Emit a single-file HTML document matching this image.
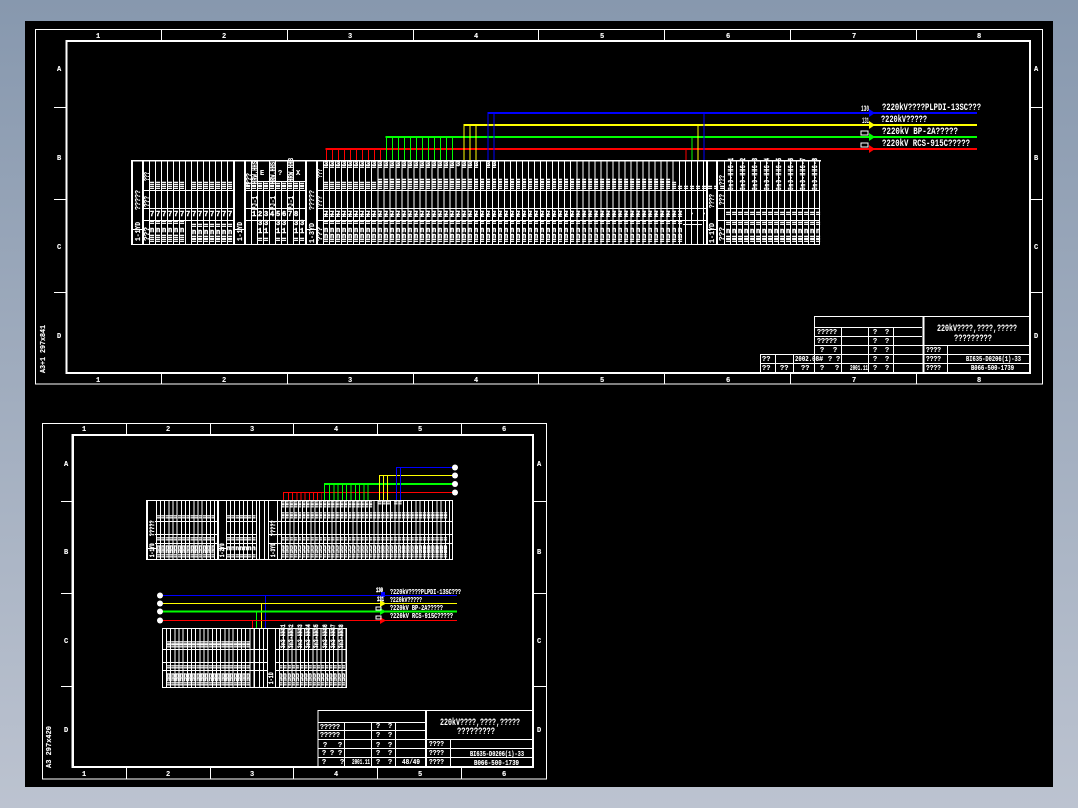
<!DOCTYPE html>
<html><head><meta charset="utf-8"><style>
html,body{margin:0;padding:0;width:1078px;height:808px;overflow:hidden;background:linear-gradient(#8798ae,#bcc3d0)}
svg{position:absolute;left:0;top:0}
text{font-family:"Liberation Mono",monospace;fill:#fff;font-weight:bold}
.m{font-size:7px;letter-spacing:1.8px;stroke:#fff;stroke-width:.4}
.s{font-size:6px;letter-spacing:.57px;stroke:#fff;stroke-width:.4}
.l{font-size:7px;stroke:#fff;stroke-width:.12}
.t{font-size:10px}
.u{font-size:8px}
.w{stroke:#fff;stroke-width:1;fill:none;shape-rendering:crispEdges}
</style></head><body>
<svg width="1078" height="808" viewBox="0 0 1078 808">
<rect x="25" y="21" width="1028" height="766" fill="#000"/>

<!-- FRAME 1 -->
<g shape-rendering="crispEdges" fill="none" stroke="#fff">
<rect x="35.5" y="29.5" width="1007" height="354.5"/>
<rect x="66.5" y="41" width="963.5" height="332" stroke-width="2"/>
<path d="M161.5 30V40M287.5 30V40M413.5 30V40M538.5 30V40M664.5 30V40M790.5 30V40M916.5 30V40M161.5 374V384M287.5 374V384M413.5 374V384M538.5 374V384M664.5 374V384M790.5 374V384M916.5 374V384M54 107.5H66M54 199.5H66M54 292.5H66M1030 107.5H1042M1030 199.5H1042M1030 292.5H1042"/>
</g>
<g>
<text class="l" x="96" y="38">1</text><text class="l" x="222" y="38">2</text><text class="l" x="348" y="38">3</text><text class="l" x="474" y="38">4</text><text class="l" x="600" y="38">5</text><text class="l" x="726" y="38">6</text><text class="l" x="852" y="38">7</text><text class="l" x="977" y="38">8</text>
<text class="l" x="96" y="382">1</text><text class="l" x="222" y="382">2</text><text class="l" x="348" y="382">3</text><text class="l" x="474" y="382">4</text><text class="l" x="600" y="382">5</text><text class="l" x="726" y="382">6</text><text class="l" x="852" y="382">7</text><text class="l" x="977" y="382">8</text>
<text class="l" x="57" y="71">A</text><text class="l" x="57" y="160">B</text><text class="l" x="57" y="249">C</text><text class="l" x="57" y="338">D</text>
<text class="l" x="1034" y="71">A</text><text class="l" x="1034" y="160">B</text><text class="l" x="1034" y="249">C</text><text class="l" x="1034" y="338">D</text>
</g>
<text class="l" transform="translate(45,373) rotate(-90)" textLength="48" lengthAdjust="spacingAndGlyphs">A3+1 297x841</text>

<!-- MAIN BUS LINES -->
<g shape-rendering="crispEdges" fill="none" stroke-width="2">
<path d="M487.5 113H977" stroke="#0000ff"/>
<path d="M463.5 125H977" stroke="#ffff00"/>
<path d="M385.5 137H977" stroke="#00ff00"/>
<path d="M325.5 149H977" stroke="#ff0000"/>
<path d="M464 125V160M470 125V160M476 125V160M698 125V160" stroke="#ffff00" stroke-width="1"/>
<path d="M488 113V160M494 113V160M704 113V160" stroke="#0000ff" stroke-width="1"/>
<path d="M692 137V160" stroke="#00ff00" stroke-width="1"/>
<path d="M686 149V160" stroke="#ff0000" stroke-width="1"/>
<line x1="326" x2="381" y1="155" y2="155" stroke="#ff0000" stroke-width="11" stroke-dasharray="1 5"/>
<line x1="386" x2="453" y1="149" y2="149" stroke="#00ff00" stroke-width="23" stroke-dasharray="1 5"/>
</g>
<path d="M869 109V117L875 113Z" fill="#0000ff"/><path d="M869 121V129L875 125Z" fill="#ffff00"/><path d="M869 133V141L875 137Z" fill="#00ff00"/><path d="M869 145V153L875 149Z" fill="#ff0000"/>
<text class="u" x="861" y="111" textLength="8" lengthAdjust="spacingAndGlyphs">130</text>
<text class="u" x="862" y="123" textLength="7" lengthAdjust="spacingAndGlyphs">131</text>
<rect x="861" y="131" width="7" height="4" class="w"/><rect x="861" y="143" width="7" height="4" class="w"/>
<text class="t" x="882" y="110" textLength="99" lengthAdjust="spacingAndGlyphs">?220kV????PLPDI-13SC???</text>
<text class="t" x="881" y="122" textLength="46" lengthAdjust="spacingAndGlyphs">?220kV?????</text>
<text class="t" x="882" y="134" textLength="76" lengthAdjust="spacingAndGlyphs">?220kV BP-2A?????</text>
<text class="t" x="882" y="146" textLength="88" lengthAdjust="spacingAndGlyphs">?220kV RCS-915C?????</text>

<!-- MAIN TABLE -->
<g shape-rendering="crispEdges" stroke="#fff" fill="none">
<path d="M131 160.5H821" stroke-width="1.5"/>
<path d="M131 244.5H820"/>
<path d="M143 190.5H233M245 190.5H305M317 190.5H706M718 190.5H820M143 208.5H233M245 208.5H305M317 208.5H706M718 208.5H820M143 220.5H233M245 220.5H305M317 220.5H706M718 220.5H820M131 229.5H143M233 229.5H245M305 229.5H317M706 229.5H717M257 181.5H305M683 224.5H702"/>
<path d="M131.5 160V245M143.5 160V245M233.5 160V245M245.5 160V245M251.5 160V245M257.5 160V245M269.5 160V245M275.5 160V245M287.5 160V245M293.5 160V245M305.5 160V245M317.5 160V245M263.5 181V245M281.5 181V245M299.5 181V245M706.5 160V245M717.5 160V245M819.5 160V245"/>
<line x1="149" x2="233" y1="202" y2="202" stroke-width="84" stroke-dasharray="1 5"/>
<line x1="323" x2="705" y1="202.5" y2="202.5" stroke-width="85" stroke-dasharray="1 5.03"/>
<line x1="724" x2="820" y1="202" y2="202" stroke-width="84" stroke-dasharray="1 5"/>
<path d="M132.5 160V245M142.5 160V245M234.5 160V245M244.5 160V245M306.5 160V245M316.5 160V245M707.5 160V245M716.5 160V245" />
</g>

<g>
<text class="m" x="324" y="166">33333333333333333333333</text>
<text class="m" x="462" y="166">333</text>
<text class="m" x="486" y="166">33</text>
<text class="m" x="324" y="169">======================</text>
<text class="m" x="462" y="169">===</text>
<text class="m" x="486" y="169">==</text>
<text class="m" x="324" y="185">   </text><text class="m" x="378" y="183">=================================================</text>
<text class="m" x="324" y="186">==========</text><text class="m" x="378" y="186">==================================================</text>
<text class="m" x="324" y="190">===================================================================</text>
<text class="m" x="150" y="186">======</text><text class="m" x="192" y="186">=======</text>
<text class="m" x="150" y="190">======</text><text class="m" x="192" y="190">=======</text>
<text class="m" x="246" y="187">==========</text>
<text class="m" x="246" y="190">==========</text>
<text class="m" x="150" y="216">77777777777777</text>
<text class="m" x="252" y="216">12345678</text>
<text class="m" x="324" y="216">777777777777777777777777777777777777777777777777777777777777</text>
<text class="m" x="324" y="218">============================================================</text>
<text class="m" x="690" y="214">. .</text>
<text class="m" x="726" y="216">================</text>
<text class="m" x="150" y="225">======</text><text class="m" x="192" y="228">=======</text>
<text class="m" x="150" y="232">nnnnnn</text><text class="m" x="192" y="234">nnnnnnn</text>
<text class="m" x="150" y="239">======</text><text class="m" x="192" y="240">=======</text>
<text class="m" x="150" y="243">======</text><text class="m" x="192" y="243">=======</text>
<text class="m" x="258" y="225">33</text><text class="m" x="276" y="225">33</text><text class="m" x="294" y="225">33</text>
<text class="m" x="258" y="233">11</text><text class="m" x="276" y="233">11</text><text class="m" x="294" y="233">11</text>
<text class="m" x="258" y="242">==</text><text class="m" x="276" y="242">==</text><text class="m" x="294" y="242">==</text>
<text class="m" x="324" y="225">============================================================</text>
<text class="m" x="324" y="232">nnnnnnnnnnnnnnnnnnnnnnnnnnnnnnnnnnnnnnnnnnnnnnnnnnnnnnnnnnnn</text>
<text class="m" x="324" y="238">nnnnnnnnnnnnnnnnnnnnnnnnnnnnnnnnnnnnnnnnnnnnnnnnnnnnnnnnnnnn</text>
<text class="m" x="324" y="243">============================================================</text>
<text class="m" x="726" y="226">================</text>
<text class="m" x="726" y="233">nnnnnnnnnnnnnnnn</text>
<text class="m" x="726" y="240">================</text>
<text class="m" x="726" y="243">================</text>
<text class="l" transform="translate(140,210) rotate(-90)" textLength="20" lengthAdjust="spacingAndGlyphs">?????</text>
<text class="l" transform="translate(140,241) rotate(-90)" textLength="19" lengthAdjust="spacingAndGlyphs">1-1YD</text>
<text class="l" transform="translate(242,241) rotate(-90)" textLength="19" lengthAdjust="spacingAndGlyphs">1-1YD</text>
<text class="l" transform="translate(314,210) rotate(-90)" textLength="20" lengthAdjust="spacingAndGlyphs">?????</text>
<text class="l" transform="translate(314,243) rotate(-90)" textLength="20" lengthAdjust="spacingAndGlyphs">1-3YD</text>
<text class="l" transform="translate(714,208) rotate(-90)" textLength="14" lengthAdjust="spacingAndGlyphs">????</text>
<text class="l" transform="translate(714,243) rotate(-90)" textLength="20" lengthAdjust="spacingAndGlyphs">1-1YD</text>
<text class="l" transform="translate(149,181) rotate(-90)" textLength="9" lengthAdjust="spacingAndGlyphs">???</text>
<text class="l" transform="translate(149,207) rotate(-90)" textLength="11" lengthAdjust="spacingAndGlyphs">???</text>
<text class="l" transform="translate(149,241) rotate(-90)" textLength="14" lengthAdjust="spacingAndGlyphs">???</text>
<text class="l" transform="translate(251,185) rotate(-90)" textLength="12" lengthAdjust="spacingAndGlyphs">???</text>
<text class="l" transform="translate(257,184) rotate(-90)" textLength="23" lengthAdjust="spacingAndGlyphs">HRW.HHS</text>
<text class="l" transform="translate(257,210) rotate(-90)" textLength="14" lengthAdjust="spacingAndGlyphs">PJ-1</text>
<text class="l" transform="translate(275,184) rotate(-90)" textLength="22" lengthAdjust="spacingAndGlyphs">HRW.HHS</text>
<text class="l" transform="translate(275,210) rotate(-90)" textLength="14" lengthAdjust="spacingAndGlyphs">PJ-1</text>
<text class="l" transform="translate(293,182) rotate(-90)" textLength="24" lengthAdjust="spacingAndGlyphs">HRW.HHB</text>
<text class="l" transform="translate(293,210) rotate(-90)" textLength="14" lengthAdjust="spacingAndGlyphs">PJ-1</text>
<text class="l" transform="translate(322,178) rotate(-90)" textLength="9" lengthAdjust="spacingAndGlyphs">???</text>
<text class="l" transform="translate(322,207) rotate(-90)" textLength="11" lengthAdjust="spacingAndGlyphs">???</text>
<text class="l" transform="translate(322,241) rotate(-90)" textLength="14" lengthAdjust="spacingAndGlyphs">???</text>
<text class="l" x="260" y="175">E</text><text class="l" x="278" y="175">?</text><text class="l" x="296" y="175">X</text>
<text class="m" transform="translate(733,190) rotate(-90)" textLength="33" lengthAdjust="spacingAndGlyphs">3n3-HHS-1</text>
<text class="m" transform="translate(745,190) rotate(-90)" textLength="33" lengthAdjust="spacingAndGlyphs">3n3-HHS-2</text>
<text class="m" transform="translate(757,190) rotate(-90)" textLength="33" lengthAdjust="spacingAndGlyphs">3n3-HHS-3</text>
<text class="m" transform="translate(769,190) rotate(-90)" textLength="33" lengthAdjust="spacingAndGlyphs">3n3-HHS-4</text>
<text class="m" transform="translate(781,190) rotate(-90)" textLength="33" lengthAdjust="spacingAndGlyphs">3n3-HHS-5</text>
<text class="m" transform="translate(793,190) rotate(-90)" textLength="33" lengthAdjust="spacingAndGlyphs">3n3-HHS-6</text>
<text class="m" transform="translate(805,190) rotate(-90)" textLength="33" lengthAdjust="spacingAndGlyphs">3n3-HHS-7</text>
<text class="m" transform="translate(817,190) rotate(-90)" textLength="33" lengthAdjust="spacingAndGlyphs">3n3-HHS-8</text>
<text class="l" transform="translate(724,185) rotate(-90)" textLength="10" lengthAdjust="spacingAndGlyphs">???</text>
<text class="l" transform="translate(724,205) rotate(-90)" textLength="11" lengthAdjust="spacingAndGlyphs">???</text>
<text class="l" transform="translate(724,241) rotate(-90)" textLength="14" lengthAdjust="spacingAndGlyphs">???</text>
</g>

<!-- TITLE BLOCK 1 -->
<g shape-rendering="crispEdges" fill="none" stroke="#fff">
<path d="M815 316.5H1030M814.5 316V373M815 327.5H922M815 336.5H922M815 345.5H1030M760 354.5H1030M760 363.5H1030M923 316V373" />
<path d="M924 316V373M841.5 327V373M868.5 327V373M893.5 327V373M760.5 354V373M775.5 354V373M793.5 354V373M947.5 345V373"/>
</g>
<g>
<text class="l" x="817" y="334" textLength="20" lengthAdjust="spacingAndGlyphs">?????</text>
<text class="l" x="817" y="343" textLength="20" lengthAdjust="spacingAndGlyphs">?????</text>
<text class="l" x="820" y="352">?</text><text class="l" x="833" y="352">?</text>
<text class="l" x="873" y="334">?</text><text class="l" x="885" y="334">?</text>
<text class="l" x="873" y="343">?</text><text class="l" x="885" y="343">?</text>
<text class="l" x="873" y="352">?</text><text class="l" x="885" y="352">?</text>
<text class="l" x="873" y="361">?</text><text class="l" x="885" y="361">?</text>
<text class="l" x="873" y="370">?</text><text class="l" x="885" y="370">?</text>
<text class="l" x="762" y="361">??</text><text class="l" x="762" y="370">??</text><text class="l" x="780" y="370">??</text><text class="l" x="801" y="370">??</text>
<text class="l" x="795" y="361" textLength="24" lengthAdjust="spacingAndGlyphs">2002.08</text>
<text class="l" x="819" y="361">#</text><text class="l" x="828" y="361">?</text><text class="l" x="836" y="361">?</text>
<text class="l" x="820" y="370">?</text><text class="l" x="835" y="370">?</text>
<text class="l" x="850" y="370" textLength="18" lengthAdjust="spacingAndGlyphs">2001.11</text>
<text class="l" x="926" y="352" textLength="15" lengthAdjust="spacingAndGlyphs">????</text>
<text class="l" x="926" y="361" textLength="15" lengthAdjust="spacingAndGlyphs">????</text>
<text class="l" x="926" y="370" textLength="15" lengthAdjust="spacingAndGlyphs">????</text>
<text class="t" x="937" y="331" textLength="80" lengthAdjust="spacingAndGlyphs">220kV????,????,?????</text>
<text class="t" x="954" y="341" textLength="38" lengthAdjust="spacingAndGlyphs">?????????</text>
<text class="l" x="966" y="361" textLength="55" lengthAdjust="spacingAndGlyphs">BI635-D0206(1)-33</text>
<text class="l" x="971" y="370" textLength="43" lengthAdjust="spacingAndGlyphs">B066-500-1739</text>
</g>

<!-- FRAME 2 -->
<g shape-rendering="crispEdges" fill="none" stroke="#fff">
<rect x="42.5" y="423.5" width="504" height="355.5"/>
<rect x="72.5" y="435" width="460.5" height="332" stroke-width="2"/>
<path d="M73.5 435V767M126.5 424V434M210.5 424V434M293.5 424V434M377.5 424V434M461.5 424V434M126.5 768V779M210.5 768V779M293.5 768V779M377.5 768V779M461.5 768V779M61 501.5H72M61 593.5H72M61 686.5H72M534 501.5H546M534 593.5H546M534 686.5H546"/>
</g>
<g>
<text class="l" x="82" y="431">1</text><text class="l" x="166" y="431">2</text><text class="l" x="250" y="431">3</text><text class="l" x="334" y="431">4</text><text class="l" x="418" y="431">5</text><text class="l" x="502" y="431">6</text>
<text class="l" x="82" y="776">1</text><text class="l" x="166" y="776">2</text><text class="l" x="250" y="776">3</text><text class="l" x="334" y="776">4</text><text class="l" x="418" y="776">5</text><text class="l" x="502" y="776">6</text>
<text class="l" x="64" y="466">A</text><text class="l" x="64" y="554">B</text><text class="l" x="64" y="643">C</text><text class="l" x="64" y="732">D</text>
<text class="l" x="537" y="466">A</text><text class="l" x="537" y="554">B</text><text class="l" x="537" y="643">C</text><text class="l" x="537" y="732">D</text>
<text class="l" transform="translate(51,768) rotate(-90)" textLength="42" lengthAdjust="spacingAndGlyphs">A3 297x420</text>
</g>

<!-- UPPER BUS 2 -->
<g shape-rendering="crispEdges" fill="none">
<path d="M283 492.5H453M283.5 492V500" stroke="#ff0000"/>
<line x1="288" x2="322" y1="496" y2="496" stroke="#ff0000" stroke-width="8" stroke-dasharray="1 3.17"/>
<path d="M324 484H453" stroke="#00ff00" stroke-width="2"/><path d="M324.5 484V500" stroke="#00ff00"/>
<line x1="329" x2="372" y1="492" y2="492" stroke="#00ff00" stroke-width="16" stroke-dasharray="1 3.3"/>
<path d="M379.5 475.5H453M379.5 475V500M383.5 475V500M387.5 475V500" stroke="#ffff00"/>
<path d="M396.5 467.5H453M396.5 467V500M400.5 467V500" stroke="#0000ff"/>
</g>
<circle cx="455" cy="467.5" r="3" fill="#fff"/><circle cx="455" cy="475.5" r="3" fill="#fff"/><circle cx="455" cy="484" r="3" fill="#fff"/><circle cx="455" cy="492.5" r="3" fill="#fff"/>

<!-- UPPER TABLE 2 -->
<g shape-rendering="crispEdges" fill="none" stroke="#fff">
<path d="M146 500.5H453M146 559.5H453M155 521.5H217M227 521.5H256M268 521.5H452M155 534.5H217M227 534.5H256M268 534.5H452M155 543.5H217M227 543.5H256M268 543.5H452M147 548.5H156M217 548.5H227"/>
<path d="M147 500V560" stroke-width="2"/><path d="M156.5 500V560M217.5 500V560M218.5 500V560M226.5 500V560M230.5 500V560M234.5 500V560M239.5 500V560M243.5 500V560M247.5 500V560M252.5 500V560M256.5 500V560M259.5 500V560M264.5 500V560M268.5 500V560M277.5 500V560M452.5 500V560"/>
<line x1="160" x2="217" y1="530" y2="530" stroke-width="60" stroke-dasharray="1 3.17"/>
<line x1="281" x2="450" y1="530" y2="530" stroke-width="60" stroke-dasharray="1 3.2"/>
</g>
<g>
<text class="s" x="157" y="519">==============</text>
<text class="s" x="157" y="541">==============</text>
<text class="s" x="157" y="549">nnnnnnnnnnnnnn</text>
<text class="s" x="157" y="553">nnnnnnnnnnnnnn</text>
<text class="s" x="157" y="558">==============</text>
<text class="s" x="227" y="519">=======</text><text class="s" x="227" y="541">=======</text><text class="s" x="227" y="550">nnnnnnn</text><text class="s" x="227" y="558">=======</text>
<text class="s" x="281" y="505">======================</text><text class="s" x="281" y="508">======================</text>
<text class="s" x="378" y="505">===</text><text class="s" x="394" y="505">==</text>
<text class="s" x="281" y="516">========================================</text>
<text class="s" x="281" y="519">========================================</text>
<text class="s" x="281" y="541">========================================</text>
<text class="s" x="281" y="549">nnnnnnnnnnnnnnnnnnnnnnnnnnnnnnnnnnnnnnnn</text>
<text class="s" x="281" y="553">nnnnnnnnnnnnnnnnnnnnnnnnnnnnnnnnnnnnnnnn</text>
<text class="s" x="281" y="558">========================================</text>
<text class="s" transform="translate(154,536) rotate(-90)" textLength="16" lengthAdjust="spacingAndGlyphs">?????</text>
<text class="s" transform="translate(154,557) rotate(-90)" textLength="14" lengthAdjust="spacingAndGlyphs">1-1YD</text>
<text class="s" transform="translate(224,557) rotate(-90)" textLength="14" lengthAdjust="spacingAndGlyphs">1-2YD</text>
<text class="s" transform="translate(275,557) rotate(-90)" textLength="14" lengthAdjust="spacingAndGlyphs">1-3YD</text>
<text class="s" transform="translate(275,536) rotate(-90)" textLength="16" lengthAdjust="spacingAndGlyphs">?????</text>
</g>

<!-- LOWER BUS 2 -->
<g shape-rendering="crispEdges" fill="none">
<path d="M160 595.5H457M265.5 595V628" stroke="#0000ff"/>
<path d="M160 603.5H457M261.5 603V628" stroke="#ffff00"/>
<path d="M160 611.5H457" stroke="#00ff00" stroke-width="2"/><path d="M256.5 611V628" stroke="#00ff00"/>
<path d="M160 620.5H457M252.5 620V628" stroke="#ff0000"/>
</g>
<circle cx="160" cy="595.5" r="3" fill="#fff"/><circle cx="160" cy="603.5" r="3" fill="#fff"/><circle cx="160" cy="611.5" r="3" fill="#fff"/><circle cx="160" cy="620.5" r="3" fill="#fff"/>
<rect x="381" y="592" width="4" height="5" fill="#0000ff"/><path d="M380 600V607L386 603.5Z" fill="#ffff00"/><path d="M380 608V615L386 611.5Z" fill="#00ff00"/><path d="M380 617V624L386 620.5Z" fill="#ff0000"/>
<text class="s" x="376" y="592" style="letter-spacing:0" textLength="7" lengthAdjust="spacingAndGlyphs">130</text>
<text class="s" x="377" y="601" style="letter-spacing:0" textLength="7" lengthAdjust="spacingAndGlyphs">131</text>
<rect x="376" y="607" width="5" height="3" class="w"/><rect x="376" y="616" width="5" height="3" class="w"/>
<text class="l" x="390" y="594" textLength="71" lengthAdjust="spacingAndGlyphs">?220kV????PLPDI-13SC???</text>
<text class="l" x="390" y="602" textLength="32" lengthAdjust="spacingAndGlyphs">?220kV?????</text>
<text class="l" x="390" y="610" textLength="53" lengthAdjust="spacingAndGlyphs">?220kV BP-2A?????</text>
<text class="l" x="390" y="618" textLength="63" lengthAdjust="spacingAndGlyphs">?220kV RCS-915C?????</text>

<!-- LOWER TABLE 2 -->
<g shape-rendering="crispEdges" fill="none" stroke="#fff">
<path d="M162 628.5H347M162 687.5H347M162 649.5H267M276 649.5H346M162 662.5H267M276 662.5H346M162 670.5H267M276 670.5H346"/>
<path d="M162.5 628V688M254.5 628V688M259.5 628V688M263.5 628V688M267.5 628V688M275.5 628V688M346.5 628V688"/>
<line x1="166" x2="254" y1="658" y2="658" stroke-width="59" stroke-dasharray="1 3.17"/>
<line x1="279" x2="346" y1="658" y2="658" stroke-width="59" stroke-dasharray="1 3.17"/>
</g>
<g>
<text class="s" x="167" y="645">====================</text>
<text class="s" x="167" y="648">====================</text>
<text class="s" x="167" y="669">====================</text>
<text class="s" x="167" y="677">nnnnnnnnnnnnnnnnnnnn</text>
<text class="s" x="167" y="681">nnnnnnnnnnnnnnnnnnnn</text>
<text class="s" x="167" y="686">====================</text>
<text class="s" x="279" y="669">================</text>
<text class="s" x="279" y="677">nnnnnnnnnnnnnnnn</text>
<text class="s" x="279" y="681">nnnnnnnnnnnnnnnn</text>
<text class="s" x="279" y="686">================</text>
<text class="s" transform="translate(285,648) rotate(-90)" textLength="24" lengthAdjust="spacingAndGlyphs">3n3-HHS1</text>
<text class="s" transform="translate(293,648) rotate(-90)" textLength="24" lengthAdjust="spacingAndGlyphs">3n3-HHS2</text>
<text class="s" transform="translate(302,648) rotate(-90)" textLength="24" lengthAdjust="spacingAndGlyphs">3n3-HHS3</text>
<text class="s" transform="translate(310,648) rotate(-90)" textLength="24" lengthAdjust="spacingAndGlyphs">3n3-HHS4</text>
<text class="s" transform="translate(318,648) rotate(-90)" textLength="24" lengthAdjust="spacingAndGlyphs">3n3-HHS5</text>
<text class="s" transform="translate(327,648) rotate(-90)" textLength="24" lengthAdjust="spacingAndGlyphs">3n3-HHS6</text>
<text class="s" transform="translate(335,648) rotate(-90)" textLength="24" lengthAdjust="spacingAndGlyphs">3n3-HHS7</text>
<text class="s" transform="translate(343,648) rotate(-90)" textLength="24" lengthAdjust="spacingAndGlyphs">3n3-HHS8</text>
<text class="s" transform="translate(273,684) rotate(-90)" textLength="12" lengthAdjust="spacingAndGlyphs">1-1D</text>
</g>

<!-- TITLE BLOCK 2 -->
<g shape-rendering="crispEdges" fill="none" stroke="#fff">
<path d="M318 710.5H533M318 722.5H425M318 730.5H425M318 739.5H533M318 748.5H533M318 757.5H533"/>
<path d="M318 710V767M425.5 710V767M426.5 710V767M344.5 722V767M371.5 722V767M395.5 722V767M450.5 739V767"/>
</g>
<g>
<text class="l" x="320" y="729" textLength="20" lengthAdjust="spacingAndGlyphs">?????</text>
<text class="l" x="320" y="737" textLength="20" lengthAdjust="spacingAndGlyphs">?????</text>
<text class="l" x="323" y="747">?</text><text class="l" x="338" y="747">?</text>
<text class="l" x="322" y="755">?</text><text class="l" x="330" y="755">?</text><text class="l" x="338" y="755">?</text>
<text class="l" x="322" y="764">?</text><text class="l" x="340" y="764">?</text>
<text class="l" x="376" y="728">?</text><text class="l" x="388" y="728">?</text>
<text class="l" x="376" y="737">?</text><text class="l" x="388" y="737">?</text>
<text class="l" x="376" y="747">?</text><text class="l" x="388" y="747">?</text>
<text class="l" x="376" y="755">?</text><text class="l" x="388" y="755">?</text>
<text class="l" x="376" y="764">?</text><text class="l" x="388" y="764">?</text>
<text class="l" x="352" y="764" textLength="18" lengthAdjust="spacingAndGlyphs">2001.11</text>
<text class="l" x="402" y="764" textLength="18" lengthAdjust="spacingAndGlyphs">48/49</text>
<text class="l" x="429" y="746" textLength="15" lengthAdjust="spacingAndGlyphs">????</text>
<text class="l" x="429" y="755" textLength="15" lengthAdjust="spacingAndGlyphs">????</text>
<text class="l" x="429" y="764" textLength="15" lengthAdjust="spacingAndGlyphs">????</text>
<text class="t" x="440" y="725" textLength="80" lengthAdjust="spacingAndGlyphs">220kV????,????,?????</text>
<text class="t" x="457" y="734" textLength="38" lengthAdjust="spacingAndGlyphs">?????????</text>
<text class="l" x="470" y="756" textLength="54" lengthAdjust="spacingAndGlyphs">BI635-D0206(1)-33</text>
<text class="l" x="474" y="765" textLength="45" lengthAdjust="spacingAndGlyphs">B066-500-1739</text>
</g>
</svg>
</body></html>
